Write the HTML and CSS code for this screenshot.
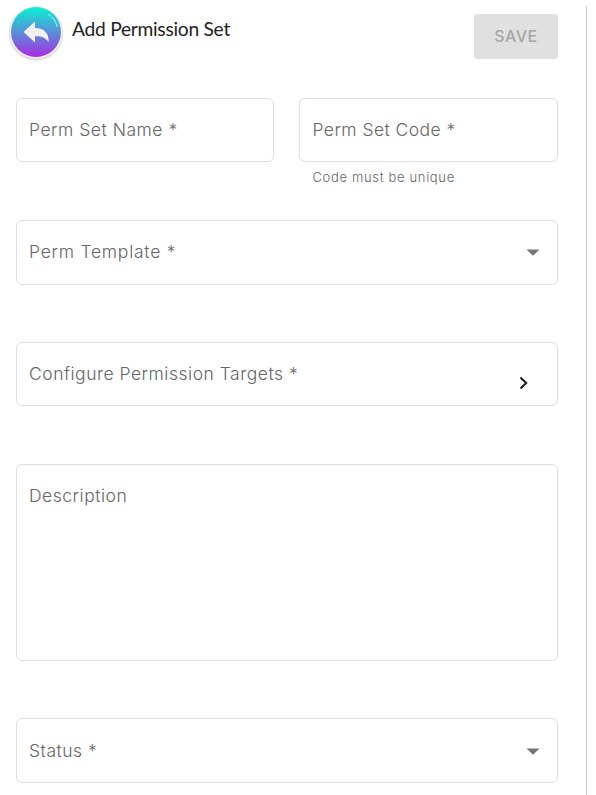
FILE: index.html
```html
<!DOCTYPE html>
<html lang="en">
<head>
<meta charset="utf-8">
<title>Add Permission Set</title>
<link rel="stylesheet" href="styles.css">
</head>
<body>
<main class="panel">
  <header class="header">
    <svg class="back" width="60" height="60" viewBox="0 0 60 60" role="img" aria-label="Back">
      <defs>
        <linearGradient id="disc" x1="0" y1="0" x2="0" y2="1">
          <stop offset="0" stop-color="#08f3d0"/>
          <stop offset="1" stop-color="#ab2be2"/>
        </linearGradient>
        <filter id="soft" x="-20%" y="-20%" width="140%" height="140%"><feGaussianBlur stdDeviation="1.5"/></filter>
      </defs>
      <circle cx="30" cy="31.5" r="26" fill="#8c8c8c" opacity=".6" filter="url(#soft)"/>
      <circle cx="30" cy="30.8" r="26" fill="#f4f1f5"/>
      <circle cx="30" cy="30" r="25" fill="url(#disc)"/>
      <path d="M42.5 12.5l2 1.500M46 15.500Q50 19 51 24.500" fill="none" stroke="#7deef0" stroke-width="1.200" stroke-linecap="round"/>
      <path d="M17.500 30L29 19.500V26C38 26 43 31 42.700 40C39 35 35 34 29 34.200V40.500Z" fill="#f2f0f5"/>
    </svg>
    <h1 class="title">Add Permission Set</h1>
    <button class="save" disabled>SAVE</button>
  </header>
  <form class="form">
    <div class="row">
      <div class="field"><label class="label name">Perm Set Name *</label></div>
      <div class="column">
        <div class="field"><label class="label code">Perm Set Code *</label></div>
        <p class="helper">Code must be unique</p>
      </div>
    </div>
    <div class="field select template">
      <label class="label template-label">Perm Template *</label>
      <svg class="caret" width="14" height="7" viewBox="0 0 14 7"><path d="M.5.500h13L7 6.800z"/></svg>
    </div>
    <div class="field targets">
      <label class="label">Configure Permission Targets *</label>
      <svg class="chevron" width="10" height="14" viewBox="0 0 10 14"><path d="M1.500 1.500L7.200 7 1.500 12.500"/></svg>
    </div>
    <div class="field description"><label class="label">Description</label></div>
    <div class="field select status">
      <label class="label">Status *</label>
      <svg class="caret" width="14" height="7" viewBox="0 0 14 7"><path d="M.5.500h13L7 6.800z"/></svg>
    </div>
  </form>
</main>
</body>
</html>
```
FILE: styles.css
```css
* { box-sizing: border-box; }
body {
  margin: 0;
  background: #fff;
  font-family: Inter, "Open Sans", sans-serif;
  color: #666;
}
.panel {
  width: 587px;
  height: 789px;
  margin-top: 6px;
  padding: 0 28px 0 16px;
  border-right: 1px solid #ccc;
}
.header {
  display: flex;
  align-items: flex-start;
  height: 92px;
}
.back {
  flex: none;
  margin: -4px 6px 0 -10px;
}
.title {
  flex: 1;
  margin: 11px 0 0;
  color: #222;
  font: 400 19.2px/24px Lato, sans-serif;
  letter-spacing: -.26px;
  white-space: nowrap;
}
.save {
  width: 84px;
  height: 45px;
  margin-top: 8px;
  padding: 0 0 2px;
  border: 0;
  border-radius: 4px;
  background: #e0e0e0;
  color: #a6a6a6;
  font: 500 16px/24px Inter, sans-serif;
  letter-spacing: .5px;
}
.form { display: flex; flex-direction: column; }
.row {
  display: grid;
  grid-template-columns: 258px 259px;
  gap: 25px;
  height: 122px;
}
.field {
  height: 64px;
  padding: 19px 12px 0;
  border: 1px solid #dedede;
  border-radius: 6px;
}
.label {
  display: block;
  font-size: 17.5px;
  font-weight: 300;
  line-height: 24px;
  letter-spacing: .51px;
  white-space: nowrap;
}
.code { padding-left: .5px; letter-spacing: .44px; }
.template-label { letter-spacing: .75px; }
.helper {
  margin: 5px 0 0 13.500px;
  font-size: 13px;
  font-weight: 300;
  line-height: 20px;
  letter-spacing: .66px;
  white-space: nowrap;
}
.select {
  display: flex;
  justify-content: space-between;
  height: 65px;
  padding-right: 17px;
}
.caret { margin-top: 8.500px; fill: #757575; }
.template { margin-bottom: 57px; }
.targets {
  display: flex;
  justify-content: space-between;
  padding-right: 28px;
  margin-bottom: 58px;
}
.chevron {
  margin-top: 14px;
  fill: none;
  stroke: #1c1c1c;
  stroke-width: 2;
}
.description { height: 197px; margin-bottom: 57px; }
.status { padding-top: 20px; }
```
